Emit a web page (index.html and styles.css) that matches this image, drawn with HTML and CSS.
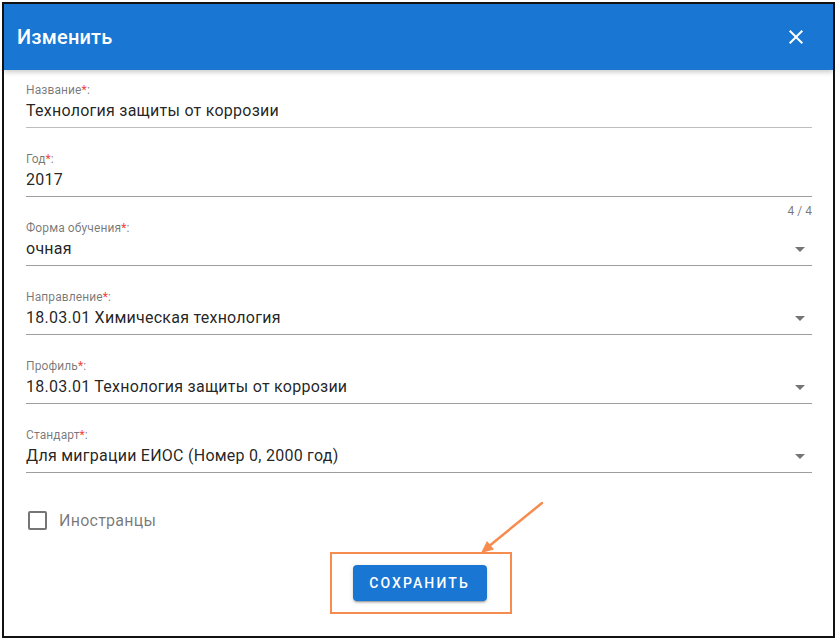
FILE: index.html
```html
<!DOCTYPE html>
<html lang="ru">
<head>
<meta charset="utf-8">
<title>Изменить</title>
<link rel="stylesheet" href="styles.css">
</head>
<body>
<div class="frame">
  <header class="bar">
    <h1 class="title">Изменить</h1>
    <button class="close" aria-label="Закрыть">
      <svg viewBox="0 0 24 24" width="24" height="24"><path fill="#fff" d="M19 6.41L17.59 5 12 10.59 6.41 5 5 6.41 10.59 12 5 17.59 6.41 19 12 13.41 17.59 19 19 17.59 13.41 12z"/></svg>
    </button>
  </header>
  <div class="content">
    <div class="field">
      <div class="label">Название<span class="req">*</span>:</div>
      <div class="value line-light">Технология защиты от коррозии</div>
      <div class="details"></div>
    </div>
    <div class="field">
      <div class="label">Год<span class="req">*</span>:</div>
      <div class="value">2017</div>
      <div class="details"><span class="counter">4 / 4</span></div>
    </div>
    <div class="field">
      <div class="label">Форма обучения<span class="req">*</span>:</div>
      <div class="value select"><span>очная</span><i class="caret"></i></div>
      <div class="details"></div>
    </div>
    <div class="field">
      <div class="label">Направление<span class="req">*</span>:</div>
      <div class="value select"><span>18.03.01 Химическая технология</span><i class="caret"></i></div>
      <div class="details"></div>
    </div>
    <div class="field">
      <div class="label">Профиль<span class="req">*</span>:</div>
      <div class="value select"><span>18.03.01 Технология защиты от коррозии</span><i class="caret"></i></div>
      <div class="details"></div>
    </div>
    <div class="field">
      <div class="label">Стандарт<span class="req">*</span>:</div>
      <div class="value select"><span>Для миграции ЕИОС (Номер 0, 2000 год)</span><i class="caret"></i></div>
      <div class="details"></div>
    </div>
    <label class="check">
      <span class="box"></span>
      <span class="check-text">Иностранцы</span>
    </label>
    <div class="actions">
      <button class="save">Сохранить</button>
    </div>
  </div>
  <svg class="annot" width="840" height="643" viewBox="0 0 840 643">
    <rect x="331" y="553" width="180" height="60" fill="none" stroke="#f68c4f" stroke-width="2"/>
    <line x1="542" y1="503" x2="488" y2="547" stroke="#f68c4f" stroke-width="2.5" stroke-linecap="round"/>
    <polygon points="481,553 487,541 494,549.5" fill="#f68c4f"/>
  </svg>
</div>
</body>
</html>
```
FILE: styles.css
```css
* { box-sizing: border-box; }
html, body { margin: 0; padding: 0; background: #fff; }
body {
  font-family: Roboto, "Liberation Sans", Arial, sans-serif;
  color: rgba(0,0,0,.87);
}
.frame {
  position: relative;
  margin: 2px;
  width: 833px;
  height: 636px;
  border: 2px solid #111;
  background: #fff;
  overflow: hidden;
}
.bar {
  height: 66px;
  background: #1976d2;
  display: flex;
  align-items: center;
  justify-content: space-between;
  padding: 0 25px 0 13px;
  box-shadow: 0 2px 5px rgba(0,0,0,.22);
  position: relative;
  z-index: 1;
}
.title {
  margin: 0;
  color: #fff;
  font-size: 20px;
  font-weight: 500;
  letter-spacing: 0.2px;
}
.close {
  border: 0;
  background: none;
  padding: 0;
  width: 24px;
  height: 24px;
  display: flex;
}
.content {
  padding: 12px 21px 0 22px;
}
.field { display: flex; flex-direction: column; }
.label {
  font-size: 12px;
  line-height: 16px;
  color: rgba(0,0,0,.54);
  letter-spacing: 0.1px;
}
.req { color: #f44336; }
.value {
  font-size: 16px;
  line-height: 26px;
  padding-bottom: 3px;
  border-bottom: 1px solid #9e9e9e;
  color: rgba(0,0,0,.87);
  letter-spacing: 0.25px;
}
.value.line-light { border-bottom-color: #bdbdbd; }
.select {
  display: flex;
  align-items: center;
  justify-content: space-between;
}
.caret {
  width: 24px;
  height: 24px;
  display: flex;
  align-items: center;
  justify-content: center;
}
.caret::before {
  content: "";
  border-left: 5px solid transparent;
  border-right: 5px solid transparent;
  border-top: 5px solid #757575;
}
.details {
  height: 23px;
  display: flex;
  justify-content: flex-end;
  padding-top: 7px;
}
.counter {
  font-size: 12px;
  line-height: 14px;
  color: rgba(0,0,0,.54);
}
.check {
  display: flex;
  align-items: center;
  height: 24px;
  margin-top: 12px;
}
.box {
  width: 19px;
  height: 19px;
  margin-left: 2px;
  border: 2px solid #757575;
  border-radius: 2px;
}
.check-text {
  margin-left: 12px;
  font-size: 16px;
  color: rgba(0,0,0,.54);
  letter-spacing: 0.25px;
}
.actions {
  display: flex;
  justify-content: center;
  margin-top: 33px;
}
.save {
  height: 36px;
  width: 134px;
  padding: 0;
  border: 0;
  border-radius: 4px;
  background: #1976d2;
  color: #fff;
  font-family: Roboto, "Liberation Sans", Arial, sans-serif;
  font-size: 14px;
  font-weight: 500;
  letter-spacing: 2.1px;
  text-transform: uppercase;
  box-shadow: 0 3px 1px -2px rgba(0,0,0,.2), 0 2px 2px 0 rgba(0,0,0,.14), 0 1px 5px 0 rgba(0,0,0,.12);
  margin-left: 1px;
}
.annot {
  position: absolute;
  left: -4px;
  top: -4px;
  pointer-events: none;
}
```
